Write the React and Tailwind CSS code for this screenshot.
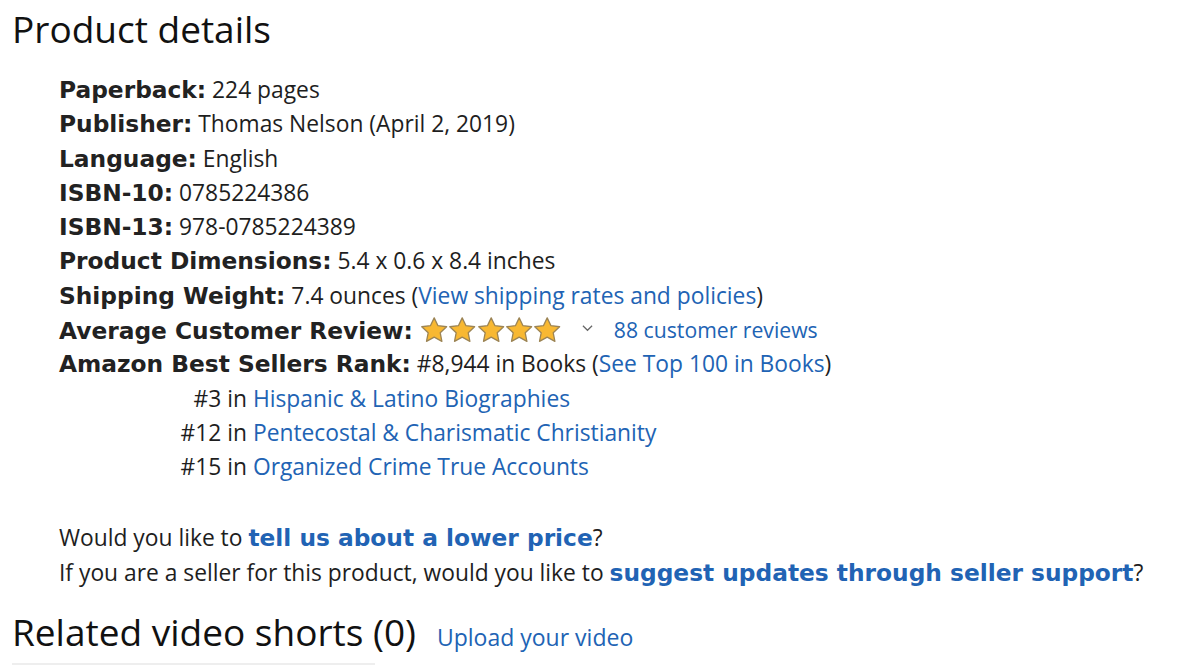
const Star = () => (
  <svg viewBox="0 0 24 24" className="w-[28.4px] h-[28.4px] inline-block">
    <path
      d="M12 1.6l3.2 6.6 7.3.9-5.4 5.1 1.4 7.2L12 17.9l-6.5 3.5 1.4-7.2-5.4-5.1 7.3-.9z"
      fill="#f8b832"
      stroke="#9c8454"
      strokeWidth="1.1"
      strokeLinejoin="round"
    />
  </svg>
);

const Label = ({ children }) => (
  <b className="font-['DejaVu_Sans',sans-serif] font-bold text-[23.3px] leading-none text-[#222]">{children}</b>
);

const A = ({ children }) => <a className="text-[#2163b4]">{children}</a>;

const BoldA = ({ children }) => (
  <a className="font-['DejaVu_Sans',sans-serif] font-bold text-[23.3px] leading-none text-[#2163b4]">{children}</a>
);

const App = () => {
  return (
    <div className="w-[1200px] h-[665px] bg-white overflow-hidden font-['Open_Sans',sans-serif] text-[#1e1e1e]">
      <h2 className="pl-[12px] pt-[6px] text-[37px] leading-[46px] text-[#111]">Product details</h2>

      {/* Details list */}
      <ul className="pl-[59px] pt-[21px] text-[22.8px] leading-[34.3px]">
        <li><Label>Paperback:</Label> 224 pages</li>
        <li><Label>Publisher:</Label> Thomas Nelson (April 2, 2019)</li>
        <li><Label>Language:</Label> English</li>
        <li><Label>ISBN-10:</Label> 0785224386</li>
        <li><Label>ISBN-13:</Label> 978-0785224389</li>
        <li><Label>Product Dimensions:</Label> 5.4 x 0.6 x 8.4 inches</li>
        <li><Label>Shipping Weight:</Label> 7.4 ounces (<A>View shipping rates and policies</A>)</li>
        <li className="flex items-center h-[34.3px]">
          <Label>Average Customer Review:</Label>
          <span className="flex items-center ml-[7px]">
            <Star /><Star /><Star /><Star /><Star />
          </span>
          <svg viewBox="0 0 12 8" className="w-[11px] h-[8px] ml-[20px] mt-[-4px]">
            <path d="M1 1.5l5 5 5-5" fill="none" stroke="#666" strokeWidth="1.3" />
          </svg>
          <span className="ml-[21px] text-[21.2px]"><A>88 customer reviews</A></span>
        </li>
        <li>
          <Label>Amazon Best Sellers Rank:</Label> #8,944 in Books (<A>See Top 100 in Books</A>)
          <ul>
            <li><span className="inline-block w-[188px] text-right">#3 in</span> <A>Hispanic &amp; Latino Biographies</A></li>
            <li><span className="inline-block w-[188px] text-right">#12 in</span> <A>Pentecostal &amp; Charismatic Christianity</A></li>
            <li><span className="inline-block w-[188px] text-right">#15 in</span> <A>Organized Crime True Accounts</A></li>
          </ul>
        </li>
      </ul>

      {/* Price / seller prompts */}
      <div className="pl-[59px] pt-[35px] text-[22.8px] leading-[35px]">
        <p>Would you like to <BoldA>tell us about a lower price</BoldA>?</p>
        <p>If you are a seller for this product, would you like to <BoldA>suggest updates through seller support</BoldA>?</p>
      </div>

      <div className="pl-[12px] pt-[20px] flex items-baseline">
        <h2 className="text-[37px] leading-[44px] text-[#111]">Related video shorts (0)</h2>
        <a className="ml-[21px] text-[23px] text-[#2163b4]">Upload your video</a>
      </div>
      <div className="ml-[12px] mt-[9px] w-[363px] h-[2px] bg-[#eee]"></div>
    </div>
  );
};

export default App;
